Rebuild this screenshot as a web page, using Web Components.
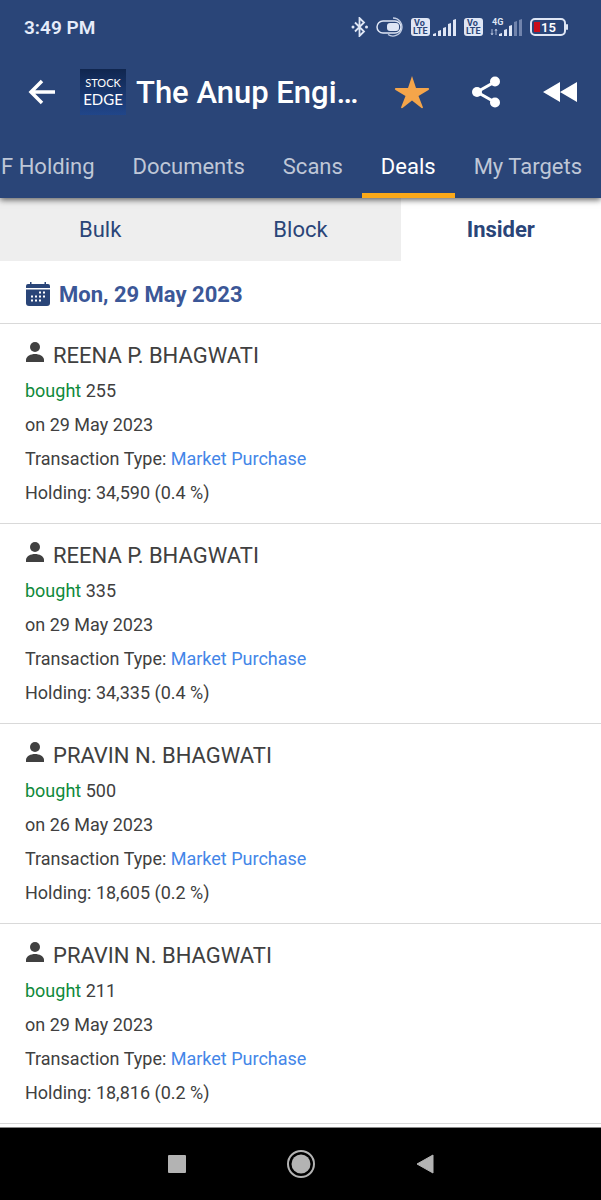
<!DOCTYPE html>
<html lang="en">
<head>
<meta charset="utf-8">
<meta name="viewport" content="width=device-width, initial-scale=1">
<title>The Anup Engineering - Deals</title>
<style>
    body{
        margin: 0;
        background-color: white;
        font-family: Roboto, "Liberation Sans", sans-serif;
        color: #404040;
    }
</style>
</head>
<body>

<deals-app>
    <status-bar slot="top" time="3:49 PM"></status-bar>
    <app-toolbar slot="top">The Anup Engi…</app-toolbar>
    <tab-bar slot="top">
        <tab-item>F Holding</tab-item>
        <tab-item>Documents</tab-item>
        <tab-item>Scans</tab-item>
        <tab-item active>Deals</tab-item>
        <tab-item>My Targets</tab-item>
    </tab-bar>

    <segment-bar>
        <segment-item>Bulk</segment-item>
        <segment-item>Block</segment-item>
        <segment-item active>Insider</segment-item>
    </segment-bar>
    <date-header>Mon, 29 May 2023</date-header>
    <deal-item quantity="255" date="29 May 2023" type="Market Purchase" holding="34,590 (0.4 %)">REENA P. BHAGWATI</deal-item>
    <deal-item quantity="335" date="29 May 2023" type="Market Purchase" holding="34,335 (0.4 %)">REENA P. BHAGWATI</deal-item>
    <deal-item quantity="500" date="26 May 2023" type="Market Purchase" holding="18,605 (0.2 %)">PRAVIN N. BHAGWATI</deal-item>
    <deal-item quantity="211" date="29 May 2023" type="Market Purchase" holding="18,816 (0.2 %)">PRAVIN N. BHAGWATI</deal-item>

    <system-nav slot="bottom"></system-nav>
</deals-app>

<script>
// name: [width, height, markup]
const icons = {
    bluetooth: [18, 20, '<path d="M4 5.5l9 9L8.500 19V1L13 5.500l-9 9" fill="none" stroke="#dfe6f5" stroke-width="1.800"/><circle cx="2" cy="10" r="1.500" fill="#dfe6f5"/><circle cx="15.500" cy="10" r="1.500" fill="#dfe6f5"/>'],
    toggle: [28, 20, '<rect x="1" y="4" width="24" height="12" rx="6" fill="none" stroke="#dfe6f5" stroke-width="1.500"/><rect x="11" y="6" width="12" height="8" rx="3" fill="#dfe6f5"/><path d="M17 1a9 9 0 1 1-5 16.500" fill="none" stroke="#c3cee4" stroke-width="1.300"/>'],
    volte: [19, 18, '<rect width="19" height="18" rx="3" fill="#dfe6f5"/><text x="3" y="8" font-size="9" font-weight="700" fill="#2a4578">Vo</text><text x="2" y="16" font-size="9" font-weight="700" fill="#2a4578">LTE</text>'],
    signal: [24, 18, '<path d="M0 18v-2l3-1v3zM5 18v-5l3-1v6zM10 18V10l3-1v9zM15 18V6l3-1v13zM20 18V2l3-1v17z" fill="#dfe6f5"/>'],
    signal4g: [33, 20, '<text x="2" y="8" font-size="9" font-weight="700" fill="#dfe6f5">4G</text><path d="M2 12v6M6 12v6M1 16l1 2 1-2M5 14l1-2 1 2" fill="none" stroke="#aab9d6"/><path d="M9 19v-2l3-1v3zM14 19v-6l3-1v7zM19 19V9l3-1v11z" fill="#dfe6f5"/><path d="M24 19V5l3-1v15zM29 19V3l3-1v17z" fill="#7184ad"/>'],
    battery: [39, 18, '<rect x="1" y="1" width="34" height="16" rx="4" fill="none" stroke="#dfe6f5" stroke-width="2"/><rect x="36" y="6" width="2" height="6" rx="1" fill="#dfe6f5"/><rect x="4" y="4" width="6" height="10" fill="#c80e1c"/><text x="11" y="14" font-size="13" font-weight="600" fill="white">15</text>'],
    back: [28, 28, '<path d="M27 14H3M14 3L3 14l11 11" fill="none" stroke="white" stroke-width="3.500"/>'],
    star: [36, 34, '<path d="M18 1l4 12h12.500q1.500 1 0 2L24.500 21l4.500 11.500q-.5 1-1.500.5L18 25.500 8.500 33q-1 .5-1.500-.5L11.500 21 1.500 15q-1.500-1 0-2H14z" fill="#f5a54a"/>'],
    share: [30, 32, '<path d="M24.500 5.500L6 16l18.500 10.500" fill="none" stroke="white" stroke-width="3"/><circle cx="24" cy="5.500" r="5" fill="white"/><circle cx="6" cy="16" r="5" fill="white"/><circle cx="24" cy="26.500" r="5" fill="white"/>'],
    rewind: [34, 20, '<path d="M17 0v20L0 10zM34 0v20L17 10z" fill="white"/>'],
    calendar: [24, 24, '<path d="M0 6V4q0-2 2-2h2V0h1.500v2h13V0H20v2h2q2 0 2 2v2z" fill="#2a4578"/><path d="M0 7.500h24V21q0 3-3 3H3q-3 0-3-3z" fill="#2a4578"/><path d="M13 9.500h2v2h-2zM17 9.500h2v2h-2zM5 13.500h2v2H5zM9 13.500h2v2H9zM13 13.500h2v2h-2zM17 13.500h2v2h-2zM5 17.500h2v2H5zM9 17.500h2v2H9zM13 17.500h2v2h-2z" fill="white"/>'],
    person: [20, 20, '<circle cx="10" cy="5" r="5" fill="#404040"/><path d="M1 20v-2c0-4 5-6 9-6s9 2 9 6v2z" fill="#404040"/>'],
    square: [18, 18, '<rect width="18" height="18" rx="1" fill="#b3b3b3"/>'],
    home: [28, 28, '<circle cx="14" cy="14" r="13" fill="none" stroke="#b3b3b3" stroke-width="2"/><circle cx="14" cy="14" r="9.500" fill="#b3b3b3"/>'],
    triangle: [18, 20, '<path d="M17 1v18L1 10z" fill="#b3b3b3" stroke="#b3b3b3" stroke-linejoin="round"/>']
};

function icon(name){
    const [w, h, body] = icons[name];
    return `<svg width="${w}" height="${h}" viewBox="0 0 ${w} ${h}" aria-hidden="true">${body}</svg>`;
}

// registers an element whose shadow root is cloned from a template
function define(name, html){
    const template = document.createElement('template');
    template.innerHTML = html;

    window.customElements.define(name, class extends HTMLElement{
        constructor(){
            super();

            this.attachShadow({mode: 'open'});
            this.shadowRoot.appendChild(template.content.cloneNode(true));
            this.shadowRoot.querySelectorAll('[data-attr]').forEach(el => {
                el.textContent = this.getAttribute(el.dataset.attr);
            });
        }
    });
}

define('deals-app', `
    <style>

    :host{
        display: flex;
        flex-direction: column;
        min-height: 100vh;
    }

    header{
        position: relative;
        background-color: #2a4578;
        box-shadow: 0 2px 6px rgba(0, 0, 0, 0.6);
    }

    main{
        flex: 1;
    }

    </style>

    <header><slot name="top"></slot></header>
    <main><slot></slot></main>
    <slot name="bottom"></slot>
`);

define('status-bar', `
    <style>

    :host{
        display: flex;
        align-items: center;
        justify-content: space-between;
        height: 54px;
        padding: 0 32px 0 24px;
        color: #e6ecfa;
        font-size: 19px;
        font-weight: 600;
    }

    div{
        display: flex;
        align-items: center;
        gap: 7px;
    }

    .sim{
        gap: 3px;
    }

    svg{
        display: block;
    }

    </style>

    <span data-attr="time"></span>
    <div>
        ${icon('bluetooth')}
        ${icon('toggle')}
        <div class="sim">${icon('volte')}${icon('signal')}</div>
        ${icon('volte')}
        ${icon('signal4g')}
        ${icon('battery')}
    </div>
`);

define('stock-logo', `
    <style>

    :host{
        display: flex;
        flex-direction: column;
        align-items: center;
        justify-content: center;
        width: 46px;
        height: 46px;
        background: linear-gradient(#10264f, #21468a);
        color: white;
        font-family: Lato, sans-serif;
    }

    .small{
        font-size: 11px;
        line-height: 14px;
    }

    .big{
        font-size: 15px;
        line-height: 18px;
    }

    </style>

    <span class="small">STOCK</span>
    <span class="big">EDGE</span>
`);

define('app-toolbar', `
    <style>

    :host{
        display: flex;
        align-items: center;
        height: 76px;
        padding: 0 4px 0 24px;
        color: white;
    }

    button{
        display: flex;
        justify-content: center;
        width: 74px;
        padding: 0;
        border: 0;
        background: none;
    }

    .back{
        width: 36px;
        margin-right: 20px;
    }

    h1{
        flex: 1;
        margin: 0 0 0 10px;
        overflow: hidden;
        white-space: nowrap;
        font-size: 31px;
        font-weight: 500;
    }

    </style>

    <button class="back" aria-label="Back">${icon('back')}</button>
    <stock-logo></stock-logo>
    <h1><slot></slot></h1>
    <button aria-label="Favourite">${icon('star')}</button>
    <button aria-label="Share">${icon('share')}</button>
    <button aria-label="Rewind">${icon('rewind')}</button>
`);

define('tab-bar', `
    <style>

    :host{
        display: flex;
        justify-content: flex-end;
        height: 68px;
        overflow: hidden;
    }

    </style>

    <slot></slot>
`);

define('tab-item', `
    <style>

    :host{
        display: flex;
        flex: none;
        color: #bfc7d7;
    }

    :host([active]){
        color: white;
    }

    button{
        padding: 9px 19px 0;
        border: 0;
        border-bottom: 5px solid transparent;
        background: none;
        color: inherit;
        font-family: inherit;
        font-size: 22px;
        white-space: nowrap;
    }

    :host([active]) button{
        border-color: #fba919;
    }

    </style>

    <button><slot></slot></button>
`);

define('segment-bar', `
    <style>

    :host{
        display: flex;
        height: 63px;
    }

    </style>

    <slot></slot>
`);

define('segment-item', `
    <style>

    :host{
        display: flex;
        flex: 1;
        background-color: #eeeeee;
    }

    :host([active]){
        background-color: white;
    }

    button{
        flex: 1;
        padding: 0;
        border: 0;
        background: none;
        color: #2a4578;
        font-family: inherit;
        font-size: 22px;
    }

    :host([active]) button{
        font-weight: 700;
    }

    </style>

    <button><slot></slot></button>
`);

define('date-header', `
    <style>

    :host{
        display: flex;
        align-items: center;
        gap: 9px;
        height: 58px;
        padding: 4px 26px 0;
        border-bottom: 1px solid #d9d9d9;
    }

    h2{
        margin: 0;
        color: #3b5797;
        font-size: 22px;
        font-weight: 700;
    }

    </style>

    ${icon('calendar')}
    <h2><slot></slot></h2>
`);

define('deal-item', `
    <style>

    :host{
        display: block;
        padding: 14px 25px 13px;
        border-bottom: 1px solid #d9d9d9;
        font-size: 18px;
        line-height: 34px;
    }

    h3{
        display: flex;
        gap: 8px;
        margin: 0;
        font-size: 22px;
        font-weight: 400;
        line-height: 36px;
    }

    svg{
        margin-top: 4px;
    }

    p{
        margin: 0;
    }

    .bought{
        color: #0f8a3c;
    }

    a{
        color: #4486e8;
        text-decoration: none;
    }

    </style>

    <h3>${icon('person')}<slot></slot></h3>
    <p><span class="bought">bought</span> <span data-attr="quantity"></span></p>
    <p>on <span data-attr="date"></span></p>
    <p>Transaction Type: <a href="#" data-attr="type"></a></p>
    <p>Holding: <span data-attr="holding"></span></p>
`);

define('system-nav', `
    <style>

    :host{
        display: flex;
        justify-content: center;
        height: 72px;
        border-top: 1px solid #888888;
        background-color: black;
    }

    button{
        display: flex;
        align-items: center;
        justify-content: center;
        width: 124px;
        padding: 0;
        border: 0;
        background: none;
    }

    </style>

    <button aria-label="Recent apps">${icon('square')}</button>
    <button aria-label="Home">${icon('home')}</button>
    <button aria-label="Back">${icon('triangle')}</button>
`);
</script>
</body>
</html>
